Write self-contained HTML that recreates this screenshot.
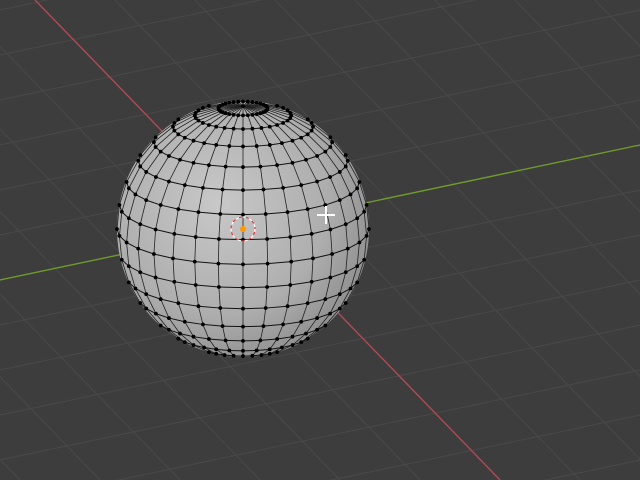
<!DOCTYPE html>
<html><head><style>html,body{margin:0;padding:0;background:#3d3d3d;width:640px;height:480px;overflow:hidden}svg{display:block}</style></head>
<body>
<svg id="s" width="640" height="480" xmlns="http://www.w3.org/2000/svg">
<defs>
<radialGradient id="g" cx="0.4" cy="0.4" r="0.72">
<stop offset="0" stop-color="#c8c8c8"/><stop offset="0.6" stop-color="#aeaeae"/><stop offset="1" stop-color="#858585"/>
</radialGradient>
</defs>
<rect width="640" height="480" fill="#3d3d3d"/>
<g id="grid" stroke="#494949" stroke-width="1"></g>
<line x1="35" y1="0" x2="500" y2="480" stroke="#b04a55" stroke-width="1.4"/>
<line x1="0" y1="280" x2="640" y2="145" stroke="#6f9a2c" stroke-width="1.4"/>
<ellipse cx="243" cy="229" rx="126" ry="128" fill="url(#g)"/>
<g id="sph"></g>
<circle cx="243" cy="229" r="12" fill="none" stroke="#fff" stroke-width="1.2" stroke-dasharray="4 3"/>
<circle cx="243" cy="229" r="12" fill="none" stroke="#e33" stroke-width="1.2" stroke-dasharray="3 4" stroke-dashoffset="4"/>
<circle cx="243" cy="229" r="3" fill="#f90"/>
<path d="M326 206v18M317 215h18" stroke="#fff" stroke-width="2"/>
</svg>
<script>
var NS="http://www.w3.org/2000/svg";
function el(p,t,a){var e=document.createElementNS(NS,t);for(var k in a)e.setAttribute(k,a[k]);p.appendChild(e);return e;}
var gr=document.getElementById('grid');
for(var i=-10;i<20;i++){var x=35+i*80;el(gr,'line',{x1:x,y1:0,x2:x+465,y2:480});}
for(var i=-10;i<25;i++){var y=280+i*45;el(gr,'line',{x1:0,y1:y,x2:640,y2:y-135});}
var s=document.getElementById('sph');
var cx=243,cy=229,R=126,t=0.28,ct=Math.cos(t),st=Math.sin(t);
function P(th,ph){var x=Math.sin(th)*Math.cos(ph),y=Math.sin(th)*Math.sin(ph),z=Math.cos(th);
return {x:cx+R*x,y:cy-R*1.015*(z*ct+y*st),d:-y*ct+z*st};}
var NR=16,NS2=32;
for(var r=1;r<NR;r++){for(var k=0;k<NS2;k++){var a=P(Math.PI*r/NR,2*Math.PI*k/NS2),b=P(Math.PI*r/NR,2*Math.PI*(k+1)/NS2);
if(a.d>-0.05&&b.d>-0.05)el(s,'line',{x1:a.x,y1:a.y,x2:b.x,y2:b.y,stroke:'#111','stroke-width':1});}}
for(var k=0;k<NS2;k++){for(var r=0;r<NR;r++){var a=P(Math.PI*r/NR,2*Math.PI*k/NS2),b=P(Math.PI*(r+1)/NR,2*Math.PI*k/NS2);
if(a.d>-0.05&&b.d>-0.05)el(s,'line',{x1:a.x,y1:a.y,x2:b.x,y2:b.y,stroke:'#222','stroke-width':0.8});}}
for(var r=1;r<NR;r++)for(var k=0;k<NS2;k++){var a=P(Math.PI*r/NR,2*Math.PI*k/NS2);if(a.d>-0.05)el(s,'circle',{cx:a.x,cy:a.y,r:1.9,fill:'#000'});}
var p=P(0,0);el(s,'circle',{cx:p.x,cy:p.y,r:1.9,fill:'#000'});
</script>
</body></html>
